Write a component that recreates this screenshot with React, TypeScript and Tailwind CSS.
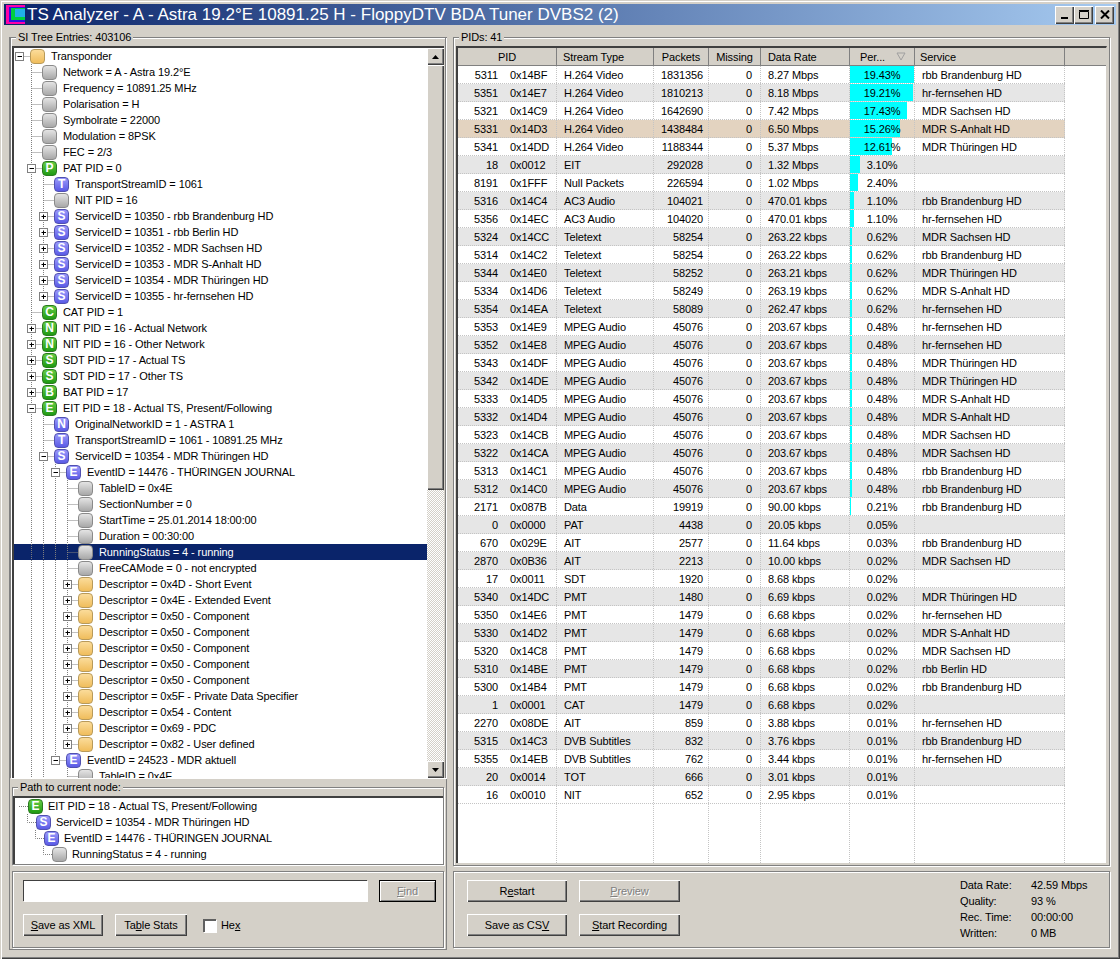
import React from "react";

type Kind = "gray" | "orange" | "green" | "blue";
type Row = { l: number; k: Kind; c?: string; t: string; e?: "+" | "-"; sel?: boolean };

const D = (t: string): Row => ({ l: 4, k: "orange", t, e: "+" });
const V = (t: string, sel?: boolean): Row => ({ l: 4, k: "gray", t, sel });

const tree: Row[] = [
  { l: 0, k: "orange", t: "Transponder", e: "-" },
  { l: 1, k: "gray", t: "Network = A - Astra 19.2°E" },
  { l: 1, k: "gray", t: "Frequency = 10891.25 MHz" },
  { l: 1, k: "gray", t: "Polarisation = H" },
  { l: 1, k: "gray", t: "Symbolrate = 22000" },
  { l: 1, k: "gray", t: "Modulation = 8PSK" },
  { l: 1, k: "gray", t: "FEC = 2/3" },
  { l: 1, k: "green", c: "P", t: "PAT PID = 0", e: "-" },
  { l: 2, k: "blue", c: "T", t: "TransportStreamID = 1061" },
  { l: 2, k: "gray", t: "NIT PID = 16" },
  { l: 2, k: "blue", c: "S", t: "ServiceID = 10350 - rbb Brandenburg HD", e: "+" },
  { l: 2, k: "blue", c: "S", t: "ServiceID = 10351 - rbb Berlin HD", e: "+" },
  { l: 2, k: "blue", c: "S", t: "ServiceID = 10352 - MDR Sachsen HD", e: "+" },
  { l: 2, k: "blue", c: "S", t: "ServiceID = 10353 - MDR S-Anhalt HD", e: "+" },
  { l: 2, k: "blue", c: "S", t: "ServiceID = 10354 - MDR Thüringen HD", e: "+" },
  { l: 2, k: "blue", c: "S", t: "ServiceID = 10355 - hr-fernsehen HD", e: "+" },
  { l: 1, k: "green", c: "C", t: "CAT PID = 1" },
  { l: 1, k: "green", c: "N", t: "NIT PID = 16 - Actual Network", e: "+" },
  { l: 1, k: "green", c: "N", t: "NIT PID = 16 - Other Network", e: "+" },
  { l: 1, k: "green", c: "S", t: "SDT PID = 17 - Actual TS", e: "+" },
  { l: 1, k: "green", c: "S", t: "SDT PID = 17 - Other TS", e: "+" },
  { l: 1, k: "green", c: "B", t: "BAT PID = 17", e: "+" },
  { l: 1, k: "green", c: "E", t: "EIT PID = 18 - Actual TS, Present/Following", e: "-" },
  { l: 2, k: "blue", c: "N", t: "OriginalNetworkID = 1 - ASTRA 1" },
  { l: 2, k: "blue", c: "T", t: "TransportStreamID = 1061 - 10891.25 MHz" },
  { l: 2, k: "blue", c: "S", t: "ServiceID = 10354 - MDR Thüringen HD", e: "-" },
  { l: 3, k: "blue", c: "E", t: "EventID = 14476 - THÜRINGEN JOURNAL", e: "-" },
  V("TableID = 0x4E"),
  V("SectionNumber = 0"),
  V("StartTime = 25.01.2014 18:00:00"),
  V("Duration = 00:30:00"),
  V("RunningStatus = 4 - running", true),
  V("FreeCAMode = 0 - not encrypted"),
  D("Descriptor = 0x4D - Short Event"),
  D("Descriptor = 0x4E - Extended Event"),
  D("Descriptor = 0x50 - Component"),
  D("Descriptor = 0x50 - Component"),
  D("Descriptor = 0x50 - Component"),
  D("Descriptor = 0x50 - Component"),
  D("Descriptor = 0x50 - Component"),
  D("Descriptor = 0x5F - Private Data Specifier"),
  D("Descriptor = 0x54 - Content"),
  D("Descriptor = 0x69 - PDC"),
  D("Descriptor = 0x82 - User defined"),
  { l: 3, k: "blue", c: "E", t: "EventID = 24523 - MDR aktuell", e: "-" },
  V("TableID = 0x4F"),
];

const tail = new Set([1, 2, 4]);
function hasNext(i: number, k: number) {
  for (let j = i + 1; j < tree.length; j++) {
    if (tree[j].l < k) return false;
    if (tree[j].l === k) return true;
  }
  return tail.has(k);
}

function Icon({ k, c }: { k: Kind; c?: string }) {
  const cls =
    k === "gray"
      ? "bg-[linear-gradient(#e4e4e4,#a8a8a8)] border-[#8a8a8a]"
      : k === "orange"
      ? "bg-[linear-gradient(#fbdc9a,#f0bd5c)] border-[#b89a5a]"
      : k === "green"
      ? "bg-[linear-gradient(#66cc44,#1f9a12)] border-[#2a7a20]"
      : "bg-[linear-gradient(#9a9afa,#5a5ae6)] border-[#5050b0]";
  return (
    <span
      className={`shrink-0 w-[15px] h-[15px] rounded-[4px] border flex items-center justify-center text-white font-bold text-[12px] leading-none ${cls}`}
    >
      {c}
    </span>
  );
}

function Gutter({ i, r }: { i: number; r: Row }) {
  const w = 16 + 12 * r.l;
  const lines: React.ReactNode[] = [];
  const dash = { stroke: "#808080", strokeDasharray: "1 1", fill: "none" } as const;
  for (let k = 1; k < r.l; k++) {
    if (hasNext(i, k)) {
      const x = 5.5 + 12 * k;
      lines.push(<line key={k} x1={x} x2={x} y1={0} y2={16} {...dash} />);
    }
  }
  const x = 5.5 + 12 * r.l;
  if (r.l > 0) {
    lines.push(<line key="up" x1={x} x2={x} y1={0} y2={hasNext(i, r.l) ? 16 : 8} {...dash} />);
  }
  lines.push(<line key="h" x1={x} x2={w} y1={8.5} y2={8.5} {...dash} />);
  return (
    <svg width={w} height={16} className="shrink-0 block">
      {lines}
      {r.e && (
        <g>
          <rect x={x - 4} y={4.5} width={8} height={8} fill="#fff" stroke="#808080" />
          <line x1={x - 2} x2={x + 2.5} y1={8.5} y2={8.5} stroke="#000" />
          {r.e === "+" && <line x1={x} x2={x} y1={6.5} y2={11} stroke="#000" />}
        </g>
      )}
    </svg>
  );
}

function Group({ title, className, children }: { title?: string; className: string; children: React.ReactNode }) {
  return (
    <div className={`relative border border-[#808080] shadow-[inset_1px_1px_0_#fff,1px_1px_0_#fff] ${className}`}>
      {title && <span className="absolute -top-[8px] left-[5px] bg-[#d4d0c8] px-[2px] leading-[14px] text-[#000]">{title}</span>}
      {children}
    </div>
  );
}

function Btn({ w, children, disabled, def }: { w: string; children: React.ReactNode; disabled?: boolean; def?: boolean }) {
  return (
    <div
      className={`${w} h-[22px] flex items-center justify-center bg-[#d4d0c8] ${
        def
          ? "border border-black shadow-[inset_1px_1px_0_#fff,inset_-1px_-1px_0_#808080]"
          : "shadow-[inset_1px_1px_0_#fff,inset_-1px_-1px_0_#404040,inset_-2px_-2px_0_#808080]"
      } ${disabled ? "text-[#808080] [text-shadow:1px_1px_0_#fff]" : "text-black"}`}
    >
      {children}
    </div>
  );
}

function ScrollBtn({ up }: { up?: boolean }) {
  return (
    <div className="w-[17px] h-[17px] shrink-0 bg-[#d4d0c8] flex items-center justify-center shadow-[inset_1px_1px_0_#fff,inset_-1px_-1px_0_#404040,inset_-2px_-2px_0_#808080]">
      <svg width="7" height="4" viewBox="0 0 7 4">
        <path d={up ? "M3.5 0L7 4H0Z" : "M0 0H7L3.5 4Z"} fill="#000" />
      </svg>
    </div>
  );
}

const pids: [number, string, string, number, number, string, number, string, string][] = [
  [5311, "0x14BF", "H.264 Video", 1831356, 0, "8.27 Mbps", 64, "19.43%", "rbb Brandenburg HD"],
  [5351, "0x14E7", "H.264 Video", 1810213, 0, "8.18 Mbps", 63, "19.21%", "hr-fernsehen HD"],
  [5321, "0x14C9", "H.264 Video", 1642690, 0, "7.42 Mbps", 57, "17.43%", "MDR Sachsen HD"],
  [5331, "0x14D3", "H.264 Video", 1438484, 0, "6.50 Mbps", 50, "15.26%", "MDR S-Anhalt HD"],
  [5341, "0x14DD", "H.264 Video", 1188344, 0, "5.37 Mbps", 42, "12.61%", "MDR Thüringen HD"],
  [18, "0x0012", "EIT", 292028, 0, "1.32 Mbps", 10, "3.10%", ""],
  [8191, "0x1FFF", "Null Packets", 226594, 0, "1.02 Mbps", 8, "2.40%", ""],
  [5316, "0x14C4", "AC3 Audio", 104021, 0, "470.01 kbps", 4, "1.10%", "rbb Brandenburg HD"],
  [5356, "0x14EC", "AC3 Audio", 104020, 0, "470.01 kbps", 4, "1.10%", "hr-fernsehen HD"],
  [5324, "0x14CC", "Teletext", 58254, 0, "263.22 kbps", 2, "0.62%", "MDR Sachsen HD"],
  [5314, "0x14C2", "Teletext", 58254, 0, "263.22 kbps", 2, "0.62%", "rbb Brandenburg HD"],
  [5344, "0x14E0", "Teletext", 58252, 0, "263.21 kbps", 2, "0.62%", "MDR Thüringen HD"],
  [5334, "0x14D6", "Teletext", 58249, 0, "263.19 kbps", 2, "0.62%", "MDR S-Anhalt HD"],
  [5354, "0x14EA", "Teletext", 58089, 0, "262.47 kbps", 2, "0.62%", "hr-fernsehen HD"],
  [5353, "0x14E9", "MPEG Audio", 45076, 0, "203.67 kbps", 2, "0.48%", "hr-fernsehen HD"],
  [5352, "0x14E8", "MPEG Audio", 45076, 0, "203.67 kbps", 2, "0.48%", "hr-fernsehen HD"],
  [5343, "0x14DF", "MPEG Audio", 45076, 0, "203.67 kbps", 2, "0.48%", "MDR Thüringen HD"],
  [5342, "0x14DE", "MPEG Audio", 45076, 0, "203.67 kbps", 2, "0.48%", "MDR Thüringen HD"],
  [5333, "0x14D5", "MPEG Audio", 45076, 0, "203.67 kbps", 2, "0.48%", "MDR S-Anhalt HD"],
  [5332, "0x14D4", "MPEG Audio", 45076, 0, "203.67 kbps", 2, "0.48%", "MDR S-Anhalt HD"],
  [5323, "0x14CB", "MPEG Audio", 45076, 0, "203.67 kbps", 2, "0.48%", "MDR Sachsen HD"],
  [5322, "0x14CA", "MPEG Audio", 45076, 0, "203.67 kbps", 2, "0.48%", "MDR Sachsen HD"],
  [5313, "0x14C1", "MPEG Audio", 45076, 0, "203.67 kbps", 2, "0.48%", "rbb Brandenburg HD"],
  [5312, "0x14C0", "MPEG Audio", 45076, 0, "203.67 kbps", 2, "0.48%", "rbb Brandenburg HD"],
  [2171, "0x087B", "Data", 19919, 0, "90.00 kbps", 1, "0.21%", "rbb Brandenburg HD"],
  [0, "0x0000", "PAT", 4438, 0, "20.05 kbps", 0, "0.05%", ""],
  [670, "0x029E", "AIT", 2577, 0, "11.64 kbps", 0, "0.03%", "rbb Brandenburg HD"],
  [2870, "0x0B36", "AIT", 2213, 0, "10.00 kbps", 0, "0.02%", "MDR Sachsen HD"],
  [17, "0x0011", "SDT", 1920, 0, "8.68 kbps", 0, "0.02%", ""],
  [5340, "0x14DC", "PMT", 1480, 0, "6.69 kbps", 0, "0.02%", "MDR Thüringen HD"],
  [5350, "0x14E6", "PMT", 1479, 0, "6.68 kbps", 0, "0.02%", "hr-fernsehen HD"],
  [5330, "0x14D2", "PMT", 1479, 0, "6.68 kbps", 0, "0.02%", "MDR S-Anhalt HD"],
  [5320, "0x14C8", "PMT", 1479, 0, "6.68 kbps", 0, "0.02%", "MDR Sachsen HD"],
  [5310, "0x14BE", "PMT", 1479, 0, "6.68 kbps", 0, "0.02%", "rbb Berlin HD"],
  [5300, "0x14B4", "PMT", 1479, 0, "6.68 kbps", 0, "0.02%", "rbb Brandenburg HD"],
  [1, "0x0001", "CAT", 1479, 0, "6.68 kbps", 0, "0.02%", ""],
  [2270, "0x08DE", "AIT", 859, 0, "3.88 kbps", 0, "0.01%", "hr-fernsehen HD"],
  [5315, "0x14C3", "DVB Subtitles", 832, 0, "3.76 kbps", 0, "0.01%", "rbb Brandenburg HD"],
  [5355, "0x14EB", "DVB Subtitles", 762, 0, "3.44 kbps", 0, "0.01%", "hr-fernsehen HD"],
  [20, "0x0014", "TOT", 666, 0, "3.01 kbps", 0, "0.01%", ""],
  [16, "0x0010", "NIT", 652, 0, "2.95 kbps", 0, "0.01%", ""],
];

const cell = "shrink-0 h-full border-r border-dotted border-[#c4c4c4] flex items-center";
const head = "shrink-0 h-full flex items-center border-r border-[#808080]";

export default function App() {
  return (
    <div className="w-[1120px] h-[959px] bg-[#d4d0c8] overflow-hidden flex flex-col p-[4px] shadow-[inset_1px_1px_0_#d4d0c8,inset_2px_2px_0_#fff,inset_-1px_-1px_0_#404040,inset_-2px_-2px_0_#808080] text-[11px] leading-[16px] tracking-[-0.1px] text-black font-['Liberation_Sans','DejaVu_Sans',sans-serif]">
      {/* Title bar */}
      <div className="h-[21px] shrink-0 flex items-center bg-[linear-gradient(90deg,#0a246a,#a6caf0)]">
        <svg width="19" height="19" viewBox="0 0 19 19" className="ml-[2px] shrink-0">
          <rect width="19" height="19" fill="#ff00a8" />
          <rect x="3" y="2" width="16" height="15" fill="#3010e0" />
          <rect x="5" y="3" width="14" height="12" fill="#00d040" />
          <rect x="9" y="4" width="10" height="8" fill="#20b0e8" />
        </svg>
        <span className="ml-[2px] text-white text-[17px] tracking-normal leading-[21px] whitespace-nowrap">
          TS Analyzer - A - Astra 19.2°E 10891.25 H - FloppyDTV BDA Tuner DVBS2 (2)
        </span>
        <div className="ml-auto flex mr-[2px] gap-0">
          {["min", "max"].map((n) => (
            <div key={n} className="w-[19px] h-[18px] flex items-center justify-center shadow-[inset_1px_1px_0_#fff,inset_-1px_-1px_0_#404040,inset_-2px_-2px_0_#808080] bg-[#d4d0c8]">
              <svg width="12" height="11" viewBox="0 0 12 11">
                {n === "min" ? <rect x="2" y="8" width="7" height="2" fill="#000" /> : <path d="M1.5 2.5H10.5V9.5H1.5ZM1 1.5H11" fill="none" stroke="#000" />}
              </svg>
            </div>
          ))}
          <div className="ml-[2px] w-[19px] h-[18px] flex items-center justify-center shadow-[inset_1px_1px_0_#fff,inset_-1px_-1px_0_#404040,inset_-2px_-2px_0_#808080] bg-[#d4d0c8]">
            <svg width="10" height="9" viewBox="0 0 10 9">
              <path d="M1 0.5L9 8.5M9 0.5L1 8.5" stroke="#000" strokeWidth="2" fill="none" />
            </svg>
          </div>
        </div>
      </div>

      {/* Body */}
      <div className="flex-1 min-h-0 flex pt-[12px] pl-[5px] pr-[6px] pb-[5px] gap-[6px]">
        {/* Left column */}
        <div className="w-[438px] shrink-0 flex flex-col px-[2px] pb-[2px] border border-[#808080] border-t-0">
          <Group title="SI Tree Entries: 403106" className="h-[741px] shrink-0 -mx-[2px] flex flex-col pt-[8px] pl-[1px] pr-[1px] border-b-0">
            <div className="flex flex-1 min-h-0 border-t-2 border-l-2 border-[#404040] bg-white">
              <div className="flex-1 min-w-0 overflow-hidden">
                {tree.map((r, i) => (
                  <div key={i} className={`h-[16px] flex items-center ${r.sel ? "bg-[#0a246a] text-white" : ""}`}>
                    <Gutter i={i} r={r} />
                    <Icon k={r.k} c={r.c} />
                    <span className="ml-[6px] whitespace-nowrap">{r.t}</span>
                  </div>
                ))}
              </div>
              <div className="w-[17px] shrink-0 flex flex-col bg-[repeating-conic-gradient(#fff_0_25%,#d4d0c8_0_50%)] bg-[length:2px_2px]">
                <ScrollBtn up />
                <div className="h-[425px] shrink-0 bg-[#d4d0c8] shadow-[inset_1px_1px_0_#fff,inset_-1px_-1px_0_#404040,inset_-2px_-2px_0_#808080]" />
                <div className="flex-1" />
                <ScrollBtn />
              </div>
            </div>
          </Group>

          <Group title="Path to current node:" className="mt-[9px] h-[78px] shrink-0 pt-[8px]">
            <div className="h-[68px] border-t-2 border-l-2 border-[#404040] bg-white">
              {[
                { k: "green" as Kind, c: "E", t: "EIT PID = 18 - Actual TS, Present/Following" },
                { k: "blue" as Kind, c: "S", t: "ServiceID = 10354 - MDR Thüringen HD" },
                { k: "blue" as Kind, c: "E", t: "EventID = 14476 - THÜRINGEN JOURNAL" },
                { k: "gray" as Kind, c: "", t: "RunningStatus = 4 - running" },
              ].map((p, i) => (
                <div key={i} className="h-[16px] flex items-center">
                  <svg width={13 + 8 * i} height={16} className="shrink-0">
                    <path d={i === 0 ? "M4 8.5H13" : `M${4 + 8 * i}.5 0V8.5H${13 + 8 * i}`} stroke="#808080" strokeDasharray="1 1" fill="none" />
                  </svg>
                  <Icon k={p.k} c={p.c} />
                  <span className="ml-[5px] whitespace-nowrap">{p.t}</span>
                </div>
              ))}
            </div>
          </Group>

          <Group className="mt-[6px] h-[77px] shrink-0 pl-[10px] pt-[8px]">
            <div className="flex items-start gap-[12px]">
              <div className="w-[344px] h-[21px] bg-white border-t border-l border-[#404040] shadow-[1px_1px_0_#fff]" />
              <Btn w="w-[57px]" disabled def>
                <span><u>F</u>ind</span>
              </Btn>
            </div>
            <div className="flex items-center mt-[12px]">
              <Btn w="w-[80px]"><span><u>S</u>ave as XML</span></Btn>
              <div className="ml-[12px]">
                <Btn w="w-[72px]"><span>Ta<u>b</u>le Stats</span></Btn>
              </div>
              <div className="ml-[16px] w-[13px] h-[13px] bg-white border-t-2 border-l-2 border-[#606060] shadow-[1px_1px_0_#fff]" />
              <span className="ml-[5px]">He<u>x</u></span>
            </div>
          </Group>
        </div>

        {/* Right column */}
        <div className="flex-1 min-w-0 flex flex-col">
          <Group title="PIDs: 41" className="h-[829px] shrink-0 pt-[8px] pl-[2px] pr-[2px] pb-[2px] flex flex-col">
            <div className="flex-1 min-h-0 border-t-2 border-l-2 border-r border-[#404040] border-r-[#d4d0c8] flex flex-col bg-white">
              <div className="h-[18px] shrink-0 flex bg-[#d4d0c8] border-b border-[#808080]">
                <div className={`${head} w-[99px] justify-center`}>PID</div>
                <div className={`${head} w-[97px] pl-[6px]`}>Stream Type</div>
                <div className={`${head} w-[55px] justify-center`}>Packets</div>
                <div className={`${head} w-[52px] justify-center`}>Missing</div>
                <div className={`${head} w-[89px] pl-[7px]`}>Data Rate</div>
                <div className={`${head} w-[65px] pl-[10px]`}>
                  Per...
                  <svg width="10" height="9" viewBox="0 0 10 9" className="ml-[11px]">
                    <path d="M1 1H9L5 8Z" fill="#d4d0c8" stroke="#a0a0a0" />
                  </svg>
                </div>
                <div className={`${head} w-[150px] pl-[5px]`}>Service</div>
              </div>
              {pids.map((p, i) => (
                <div
                  key={i}
                  className={`h-[18px] shrink-0 w-[607px] flex border-b border-dotted border-[#c4c4c4] ${
                    i === 3 ? "bg-[#e3d3c0]" : i % 2 === 1 ? "bg-[#e6e6e6]" : "bg-white"
                  }`}
                >
                  <div className={`${cell} w-[99px]`}>
                    <span className="w-[40px] text-right">{p[0]}</span>
                    <span className="ml-[12px]">{p[1]}</span>
                  </div>
                  <div className={`${cell} w-[97px] pl-[7px]`}>{p[2]}</div>
                  <div className={`${cell} w-[55px] justify-end pr-[5px]`}>{p[3]}</div>
                  <div className={`${cell} w-[52px] justify-end pr-[8px]`}>{p[4]}</div>
                  <div className={`${cell} w-[89px] pl-[7px]`}>{p[5]}</div>
                  <div className={`${cell} w-[65px] justify-center relative`}>
                    <span className="absolute left-0 top-0 bottom-0 bg-[#00ffff]" style={{ width: p[6] }} />
                    <span className="relative">{p[7]}</span>
                  </div>
                  <div className={`${cell} w-[150px] pl-[7px]`}>{p[8]}</div>
                </div>
              ))}
              <div className="flex-1 min-h-0 flex w-[607px]">
                {["w-[99px]", "w-[97px]", "w-[55px]", "w-[52px]", "w-[89px]", "w-[65px]", "w-[150px]"].map((w) => (
                  <div key={w} className={`${cell} ${w}`} />
                ))}
              </div>
            </div>
          </Group>

          <Group className="mt-[5px] h-[77px] shrink-0 flex pl-[13px] pt-[8px]">
            <div className="flex flex-col gap-[12px]">
              <div className="flex gap-[12px]">
                <Btn w="w-[100px]"><span>R<u>e</u>start</span></Btn>
                <Btn w="w-[101px]" disabled><span><u>P</u>review</span></Btn>
              </div>
              <div className="flex gap-[12px]">
                <Btn w="w-[100px]"><span>Save as CS<u>V</u></span></Btn>
                <Btn w="w-[101px]"><span><u>S</u>tart Recording</span></Btn>
              </div>
            </div>
            <div className="ml-auto mr-[22px] -mt-[3px] grid grid-cols-[71px_56px] auto-rows-[16px] items-center whitespace-nowrap">
              <span>Data Rate:</span><span>42.59 Mbps</span>
              <span>Quality:</span><span>93 %</span>
              <span>Rec. Time:</span><span>00:00:00</span>
              <span>Written:</span><span>0 MB</span>
            </div>
          </Group>
        </div>
      </div>
    </div>
  );
}
